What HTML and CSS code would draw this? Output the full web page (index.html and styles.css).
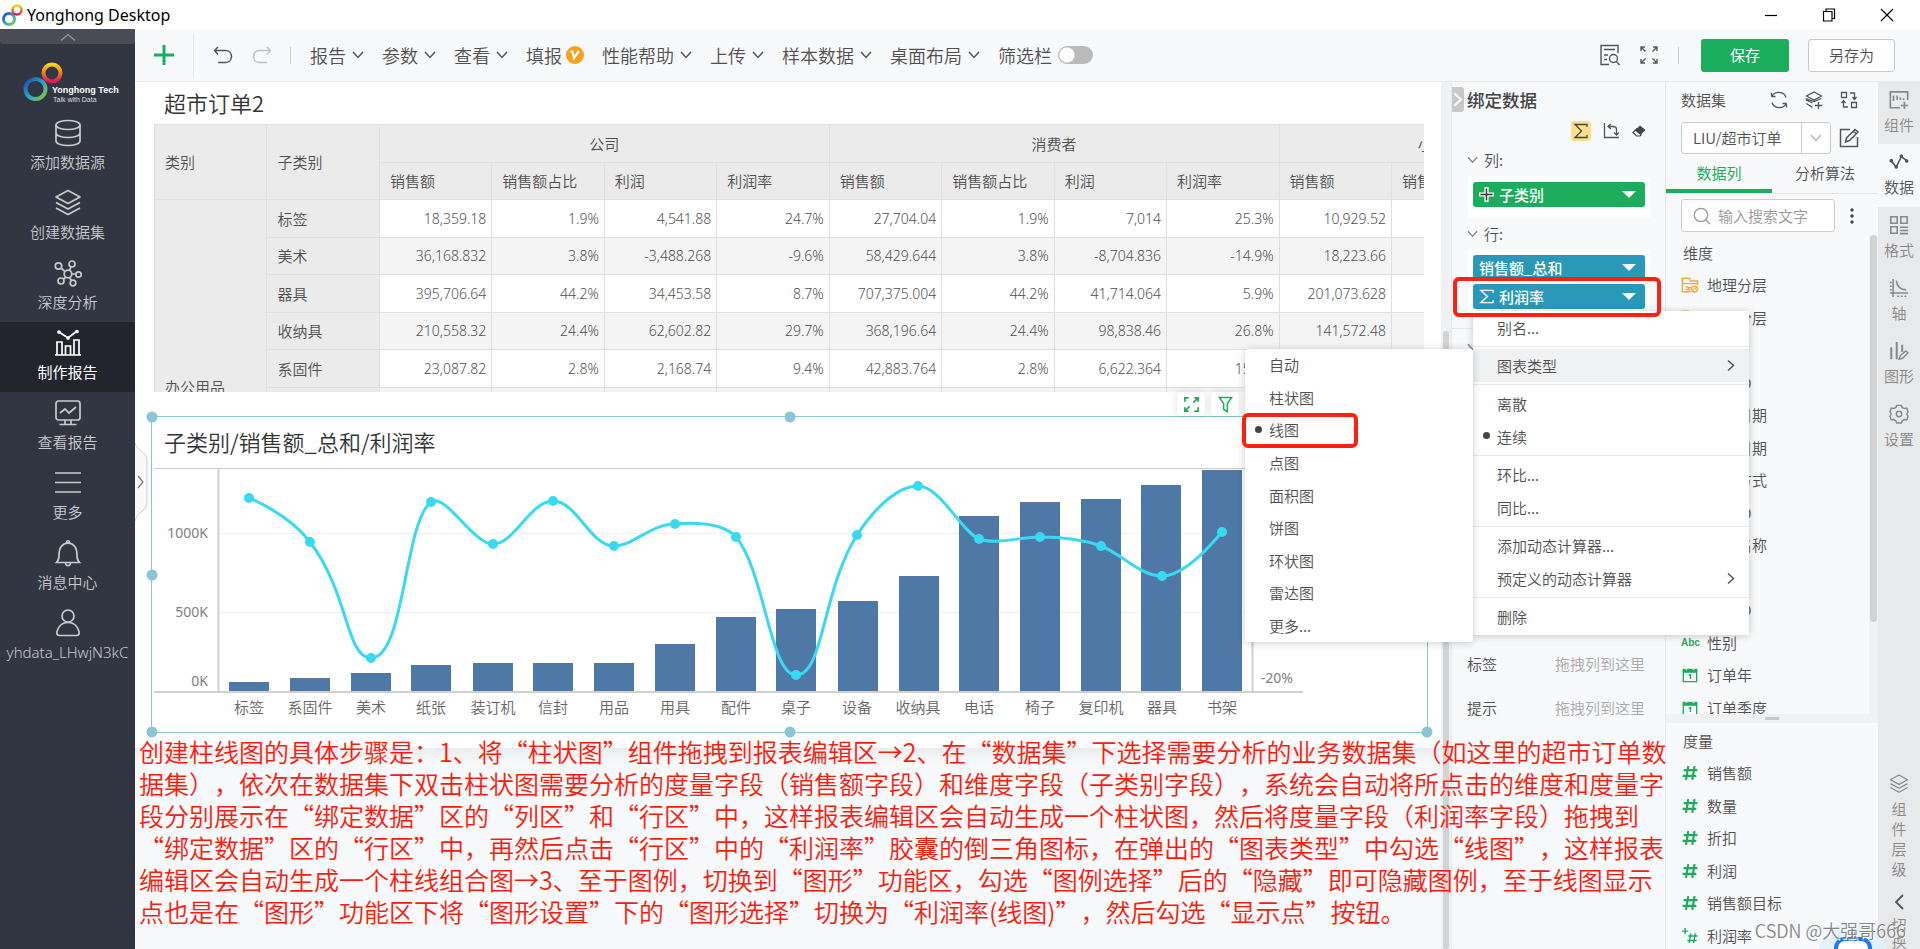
FILE: index.html
```html
<!DOCTYPE html>
<html lang="zh-CN">
<head>
<meta charset="utf-8">
<title>Yonghong Desktop</title>
<link rel="stylesheet" href="styles.css">
</head>
<body>
<svg class="defs" aria-hidden="true">
  <defs>
    <linearGradient id="gb" x1="0" y1="0" x2="1" y2="1"><stop offset="0" stop-color="#1a4fa8"/><stop offset=".5" stop-color="#28a3cf"/><stop offset="1" stop-color="#8cc63e"/></linearGradient>
    <linearGradient id="gr" x1="0" y1="0" x2="0" y2="1"><stop offset="0" stop-color="#fcd21c"/><stop offset=".5" stop-color="#f47a20"/><stop offset="1" stop-color="#e6145a"/></linearGradient>
    <symbol id="down" viewBox="0 0 12 8"><path d="M1 1l5 5.500L11 1" fill="none" stroke="currentColor" stroke-width="1.500"/></symbol>
    <symbol id="right" viewBox="0 0 8 12"><path d="M1 1l5.500 5L1 11" fill="none" stroke="currentColor" stroke-width="1.400"/></symbol>
    <symbol id="layers" viewBox="0 0 28 28"><path d="M14 1.500L26 8 14 14.500 2 8zM2 13.500l12 6.500 12-6.500M2 19l12 6.500L26 19" fill="none" stroke="currentColor" stroke-width="1.700" stroke-linejoin="round"/></symbol>
    <symbol id="hash" viewBox="0 0 14 14"><path d="M5.500 1L3.500 13M11 1L9 13M1.500 4.500h12M.5 9.500h12" fill="none" stroke="currentColor" stroke-width="1.900"/></symbol>
    <symbol id="cal" viewBox="0 0 18 18"><path d="M1.500 3h15v13.500h-15z" fill="none" stroke="currentColor" stroke-width="1.500"/><path d="M1 2h16v4.500H1z" fill="currentColor"/><path d="M5 0v3.500M13 0v3.500" stroke="#f8f9fb" stroke-width="1.500"/><path d="M7.500 9.500L9.500 8.500v5" fill="none" stroke="currentColor" stroke-width="1.500"/></symbol>
    <symbol id="folder" viewBox="0 0 20 18"><path d="M18.500 9V4.500h-8L9 1.500H1.500v15H11M1.500 7.500h17M5 11h2l1 1h3M5 14h5" fill="none" stroke="currentColor" stroke-width="1.500"/><circle cx="15" cy="13.500" r="3.300" fill="none" stroke="currentColor" stroke-width="1.400"/><path d="M12.700 15.800l4.600-4.600" stroke="currentColor" stroke-width="1.300"/></symbol>
  </defs>
</svg>

<div class="app">
  <header class="titlebar">
    <svg class="app-icon" viewBox="0 0 22 26"><circle cx="8" cy="17" r="5.500" fill="none" stroke="url(#gb)" stroke-width="3"/><circle cx="16" cy="8" r="4.500" fill="none" stroke="url(#gr)" stroke-width="2.600"/></svg>
    <span class="app-name">Yonghong Desktop</span>
    <div class="win-controls">
      <button aria-label="最小化"><svg viewBox="0 0 14 14"><path d="M1 7.500h12" stroke="#000" stroke-width="1.200"/></svg></button>
      <button aria-label="还原"><svg viewBox="0 0 14 14"><path d="M1.500 3.500h8.500v9.500H1.500zM4 3.500V1h8.500v9.500H10" fill="none" stroke="#000" stroke-width="1.200"/></svg></button>
      <button aria-label="关闭"><svg viewBox="0 0 14 14"><path d="M1 1l12 12M13 1L1 13" stroke="#000" stroke-width="1.200"/></svg></button>
    </div>
  </header>

  <div class="body">
    <nav class="nav">
      <button class="nav-fold" aria-label="收起"><svg viewBox="0 0 16 8"><path d="M1 7.500l7-6 7 6" fill="none" stroke="#8b8d95" stroke-width="1.600"/></svg></button>
      <div class="logo">
        <svg viewBox="0 0 108 44">
          <circle cx="12.500" cy="28" r="10" fill="none" stroke="url(#gb)" stroke-width="4"/>
          <circle cx="29" cy="12" r="8.500" fill="none" stroke="url(#gr)" stroke-width="4"/>
          <text x="29" y="32" class="logo-name">Yonghong Tech</text>
          <text x="30" y="41" class="logo-sub">Talk with Data</text>
        </svg>
      </div>
      <a class="nav-item" href="#"><svg viewBox="0 0 28 28"><ellipse cx="14" cy="6" rx="12" ry="4.500"/><path d="M2 6v16c0 2.500 5.500 4.500 12 4.500s12-2 12-4.500V6M2 14c0 2.500 5.500 4.500 12 4.500s12-2 12-4.500"/></svg>添加数据源</a>
      <a class="nav-item" href="#"><svg viewBox="0 0 28 28"><use href="#layers"/></svg>创建数据集</a>
      <a class="nav-item" href="#"><svg viewBox="0 0 28 28"><circle cx="14" cy="15" r="3.800"/><circle cx="4.500" cy="7" r="3.200"/><circle cx="18" cy="5" r="3"/><circle cx="24.500" cy="15.500" r="2.700"/><circle cx="7" cy="22" r="3"/><circle cx="19" cy="24" r="2.800"/><path d="M7 9l4 3.500M17 8l-1.500 3.500M18 15h4M12 18l-3 2.500M15.500 18.500l2 3"/></svg>深度分析</a>
      <a class="nav-item active" href="#"><svg viewBox="0 0 28 28"><path d="M1 26h26M3 26V13h5v13M11.500 26V17h5v9M20 26V11h5v15M5 3l9 6 9-7"/><circle cx="5" cy="3" r="1"/><circle cx="14" cy="9" r="1"/><circle cx="23" cy="2.500" r="1"/></svg>制作报告</a>
      <a class="nav-item" href="#"><svg viewBox="0 0 28 28"><rect x="2" y="2" width="24" height="19" rx="2.500"/><path d="M6 14l5-4 4 4 7-6M11 21v4M17 21v4M5.500 25.500h17"/></svg>查看报告</a>
      <a class="nav-item" href="#"><svg viewBox="0 0 28 28"><path d="M1 4h26M1 13.500h26M1 23h26"/></svg>更多</a>
      <a class="nav-item" href="#"><svg viewBox="0 0 28 28"><path d="M2.500 23.500h23c-2-2-2.500-4-2.500-7 0-6-2-12-9-12.500C7 4.500 5 10.500 5 16.500c0 3-.5 5-2.500 7zM12.500 4c0-3 3-3 3 0M11.500 24c.5 3.500 4.500 3.500 5 0"/></svg>消息中心</a>
      <a class="nav-item" href="#"><svg viewBox="0 0 28 28"><circle cx="14" cy="7" r="6"/><path d="M5.500 26.500c-2.500 0-3-2-2.500-4C4.500 17 8 13.500 14 13.500S23.500 17 25 22.500c.5 2 0 4-2.500 4z"/></svg><span class="latin">yhdata_LHwjN3kC</span></a>
    </nav>

    <div class="workspace">
      <div class="toolbar">
        <button class="tb-add" aria-label="新建"><svg viewBox="0 0 22 22"><path d="M11 1v20M1 11h20" stroke="#1aae5c" stroke-width="3"/></svg></button>
        <button class="tb-undo" aria-label="撤销"><svg viewBox="0 0 20 18"><path d="M5 1L1.500 4.500 5 8.500M2 4.500h10.500c3.500 0 6 2.500 6 6s-2.500 6-6 6H5" fill="none" stroke="#555" stroke-width="1.500"/></svg></button>
        <button class="tb-undo" aria-label="重做"><svg viewBox="0 0 20 18"><path d="M15 1l3.500 3.500L15 8.500M18 4.500H7.500c-3.500 0-6 2.500-6 6s2.500 6 6 6H15" fill="none" stroke="#c0c0c0" stroke-width="1.500"/></svg></button>
        <i class="tb-sep"></i>
        <div class="tb-menus">
          <button>报告<svg><use href="#down"/></svg></button>
          <button>参数<svg><use href="#down"/></svg></button>
          <button>查看<svg><use href="#down"/></svg></button>
          <button class="vip">填报<svg class="vip-icon" viewBox="0 0 18 18"><circle cx="9" cy="9" r="9" fill="#fa9e1b"/><path d="M4.500 6l2-.5L8 12l5-7" fill="none" stroke="#fff" stroke-width="2.200"/></svg></button>
          <button>性能帮助<svg><use href="#down"/></svg></button>
          <button>上传<svg><use href="#down"/></svg></button>
          <button>样本数据<svg><use href="#down"/></svg></button>
          <button>桌面布局<svg><use href="#down"/></svg></button>
          <label class="switch">筛选栏<input type="checkbox"></label>
        </div>
        <div class="tb-right">
          <button class="tb-icon" aria-label="预览"><svg viewBox="0 0 22 22"><path d="M19 9V1.500H2v19h8M5 5.500h11M5 11h4M5 15.500h3" fill="none" stroke="#555" stroke-width="1.400"/><circle cx="14.500" cy="14.500" r="4" fill="none" stroke="#555" stroke-width="1.400"/><path d="M17.500 17.500l3 3.500" stroke="#555" stroke-width="1.400"/></svg></button>
          <button class="tb-icon" aria-label="全屏"><svg viewBox="0 0 22 22"><path d="M3 7V3h4M3 3l4.500 4.500M15 3h4v4M19 3l-4.500 4.500M3 15v4h4M3 19l4.500-4.500M19 15v4h-4M19 19l-4.500-4.500" fill="none" stroke="#555" stroke-width="1.400"/></svg></button>
          <i class="tb-sep"></i>
          <button class="save">保存</button>
          <button class="save-as">另存为</button>
        </div>
      </div>

      <div class="content">
        <main class="canvas">
          <div class="report">
            <h1 class="report-title">超市订单2</h1>
            <div class="table-wrap">
              <table class="pivot">
                <thead>
                  <tr><th rowspan="2">类别</th><th rowspan="2">子类别</th><th colspan="4" class="grp">公司</th><th colspan="4" class="grp">消费者</th><th colspan="3" class="grp">小型企业</th></tr>
                  <tr class="short"><th>销售额</th><th>销售额占比</th><th>利润</th><th>利润率</th><th>销售额</th><th>销售额占比</th><th>利润</th><th>利润率</th><th>销售额</th><th>销售额占比</th><th>利润</th></tr>
                </thead>
                <tbody>
                  <tr><th rowspan="6" class="cat">办公用品</th><th>标签</th><td>18,359.18</td><td>1.9%</td><td>4,541.88</td><td>24.7%</td><td>27,704.04</td><td>1.9%</td><td>7,014</td><td>25.3%</td><td>10,929.52</td><td></td><td></td></tr>
                  <tr class="short alt"><th>美术</th><td>36,168.832</td><td>3.8%</td><td>-3,488.268</td><td>-9.6%</td><td>58,429.644</td><td>3.8%</td><td>-8,704.836</td><td>-14.9%</td><td>18,223.66</td><td></td><td></td></tr>
                  <tr><th>器具</th><td>395,706.64</td><td>44.2%</td><td>34,453.58</td><td>8.7%</td><td>707,375.004</td><td>44.2%</td><td>41,714.064</td><td>5.9%</td><td>201,073.628</td><td></td><td></td></tr>
                  <tr class="short alt"><th>收纳具</th><td>210,558.32</td><td>24.4%</td><td>62,602.82</td><td>29.7%</td><td>368,196.64</td><td>24.4%</td><td>98,838.46</td><td>26.8%</td><td>141,572.48</td><td></td><td></td></tr>
                  <tr><th>系固件</th><td>23,087.82</td><td>2.8%</td><td>2,168.74</td><td>9.4%</td><td>42,883.764</td><td>2.8%</td><td>6,622.364</td><td>15.4%</td><td></td><td></td><td></td></tr>
                  <tr class="short alt"><th></th><td></td><td></td><td></td><td></td><td></td><td></td><td></td><td></td><td></td><td></td><td></td></tr>
                </tbody>
              </table>
            </div>

            <section class="chart">
              <h2 class="chart-title">子类别/销售额_总和/利润率</h2>
              <svg class="plot" viewBox="154 468 1270 264">
                <path d="M219 533.500h1033M219 612.500h1033" stroke="#f0f0f0"/>
                <path d="M154 468.500h1270" stroke="#ccc"/>
                <g class="bars">
                  <path d="M229 682h40v9h-40zM290 678h40v13h-40zM351 673h40v18h-40zM411 665h40v26h-40zM473 663h40v28h-40zM533 663h40v28h-40zM594 663h40v28h-40zM655 644h40v47h-40zM716 617h40v74h-40zM776 609h40v82h-40zM838 601h40v90h-40zM899 576h40v115h-40zM959 516h40v175h-40zM1020 502h40v189h-40zM1081 499h40v192h-40zM1141 485h40v206h-40zM1202 470h40v221h-40z"/>
                </g>
                <path d="M218.500 468v224M1252.500 468v224" stroke="#d0d0d0" stroke-width="2"/>
                <path d="M154 692h1149" stroke="#d0d0d0" stroke-width="2"/>
                <path class="line" d="M249 498C249 498 288 513 310 542C349 593 346 658 371 658C405 658 404 522 431 502C445 492 473 544 493 544C515 544 530 501 553 501C577 501 590 546 614 546C634 546 650 524 675 524C700 522 724 524 736 537C765 572 770 675 796 675C824 675 822 590 857 535C878 503 900 486 918 486C940 486 960 530 979 539C996 545 1020 537 1040 537C1062 537 1084 540 1101 546C1122 554 1140 576 1162 576C1180 576 1202 556 1222 532"/>
                <g fill="#38daf2">
                  <circle cx="249" cy="498" r="5"/><circle cx="310" cy="542" r="5"/><circle cx="371" cy="658" r="5"/><circle cx="431" cy="502" r="5"/><circle cx="493" cy="544" r="5"/><circle cx="553" cy="501" r="5"/><circle cx="614" cy="546" r="5"/><circle cx="675" cy="524" r="5"/><circle cx="736" cy="537" r="5"/><circle cx="796" cy="675" r="5"/><circle cx="857" cy="535" r="5"/><circle cx="918" cy="486" r="5"/><circle cx="979" cy="539" r="5"/><circle cx="1040" cy="537" r="5"/><circle cx="1101" cy="546" r="5"/><circle cx="1162" cy="576" r="5"/><circle cx="1222" cy="532" r="5"/>
                </g>
                <g class="ylab"><text x="208" y="538">1000K</text><text x="208" y="617">500K</text><text x="208" y="686">0K</text><text x="1293" y="683">-20%</text></g>
                <g class="xlab"><text x="249" y="713">标签</text><text x="310" y="713">系固件</text><text x="371" y="713">美术</text><text x="431" y="713">纸张</text><text x="493" y="713">装订机</text><text x="553" y="713">信封</text><text x="614" y="713">用品</text><text x="675" y="713">用具</text><text x="736" y="713">配件</text><text x="796" y="713">桌子</text><text x="857" y="713">设备</text><text x="918" y="713">收纳具</text><text x="979" y="713">电话</text><text x="1040" y="713">椅子</text><text x="1101" y="713">复印机</text><text x="1162" y="713">器具</text><text x="1222" y="713">书架</text></g>
              </svg>
              <i class="knob tl"></i><i class="knob tc"></i><i class="knob ml"></i><i class="knob bl"></i><i class="knob bc"></i><i class="knob br"></i>
              <div class="chart-tools">
                <button aria-label="放大"><svg viewBox="0 0 18 18"><path d="M2 6V2h4M12 2h4v4M16 2l-5 5M2 12v4h4M2 16l5-5M16 12v4h-4" fill="none" stroke="#1aae5c" stroke-width="1.800"/></svg></button>
                <button aria-label="筛选"><svg viewBox="0 0 18 18"><path d="M2.500 1.500h13L11 8v8.500L7 14V8z" fill="none" stroke="#1aae5c" stroke-width="1.600"/></svg></button>
              </div>
            </section>
          </div>
          <button class="side-pull" aria-label="展开"><svg viewBox="0 0 14 78"><path d="M0 0c1 7 12 9 12 17v43c0 8-11 10-12 18" fill="#f8f9fb" stroke="#ccd0d6"/><path d="M3 33l5 6-5 6" fill="none" stroke="#777" stroke-width="1.200"/></svg></button>
        </main>

        <div class="scroll main-scroll"><i></i></div>

        <section class="bind">
          <button class="bind-fold" aria-label="收起绑定"><svg><use href="#right"/></svg></button>
          <h3 class="bind-title">绑定数据</h3>
          <div class="bind-tools">
            <button class="on" aria-label="汇总"><svg viewBox="0 0 16 16"><path d="M14 4V1.500H2L8.500 8 2 14.500h12V12" fill="none" stroke="#444" stroke-width="1.300"/></svg></button>
            <button aria-label="交换"><svg viewBox="0 0 16 16"><path d="M1.500 0v14.500H16M8 1L5 3.500 8 6M5 3.500h5c2.500 0 3.500 1 3.500 3V12M11 9.500l2.500 2.500L16 9.500" fill="none" stroke="#555" stroke-width="1.300"/></svg></button>
            <button aria-label="清除"><svg viewBox="0 0 16 16"><path d="M9 2.500l5.500 4.500-5 5L4 7.500z" fill="#444"/><path d="M6 5.500l-4 4 3.500 3.500H9l1.500-1.500" fill="none" stroke="#444" stroke-width="1.200"/></svg></button>
          </div>
          <div class="bind-label"><svg><use href="#down"/></svg>列:</div>
          <div class="zone">
            <button class="chip green"><svg class="chip-icon" viewBox="0 0 16 16"><path d="M8 0v16M0 8h16" stroke="#fff" stroke-width="4.500"/><path d="M8 1.500v13M1.500 8h13" stroke="#333" stroke-width="1.500"/></svg>子类别<i class="caret"></i></button>
          </div>
          <div class="bind-label second"><svg><use href="#down"/></svg>行:</div>
          <div class="zone two">
            <button class="chip">销售额_总和<i class="caret"></i></button>
            <button class="chip"><svg class="chip-icon" viewBox="0 0 16 16"><path d="M15 4V1.500H2L9 8l-7 6.500h13V12" fill="none" stroke="#fff" stroke-width="1.500"/></svg>利润率<i class="caret"></i></button>
          </div>
          <div class="bind-more"><svg><use href="#down"/></svg></div>
          <div class="drops">
            <div class="drop"><span>标签</span><em>拖拽列到这里</em></div>
            <div class="drop"><span>提示</span><em>拖拽列到这里</em></div>
          </div>
        </section>

        <section class="data">
          <div class="data-head"><span>数据集</span>
            <button aria-label="刷新"><svg viewBox="0 0 18 18"><path d="M1.500 5.500v-4M1.500 5.500h4M2 5c3-5 12-5 14 1.500M16.500 12.500v4M16.500 12.500h-4M16 13C13 18 4 18 2 11.500" fill="none" stroke="#555" stroke-width="1.300"/></svg></button>
            <button aria-label="添加"><svg viewBox="0 0 18 18"><path d="M9 1l7.500 4L9 9 1.500 5zM16.500 7.500L9 10.500 1.500 8v1l6 3M1.500 12.500l6 4M13.500 11v7M10 14.500h7" fill="none" stroke="#555" stroke-width="1.300"/></svg></button>
            <button aria-label="替换"><svg viewBox="0 0 18 18"><path d="M1.500 1.500h5v5h-5zM11.500 11.500h5v5h-5zM10 2h4.500v6M12.500 6l2 2.500 2-2.500M8 16H3.500v-6M1.500 12l2-2.500 2 2.500" fill="none" stroke="#555" stroke-width="1.300"/></svg></button>
          </div>
          <div class="data-pick">
            <div class="select-box"><select aria-label="数据集"><option>LIU/超市订单</option></select><span><svg><use href="#down"/></svg></span></div>
            <button aria-label="编辑"><svg viewBox="0 0 20 20"><path d="M11 1.500H1.500v17h17V9M6.500 14l1-4L16 1.500l3 2.500-8.500 8.500zM14.500 3l3 3" fill="none" stroke="#555" stroke-width="1.500"/></svg></button>
          </div>
          <div class="tabs"><button class="sel">数据列</button><button>分析算法</button></div>
          <div class="search-row">
            <label class="search"><svg viewBox="0 0 18 18"><circle cx="8" cy="8" r="6.700" fill="none" stroke="#999" stroke-width="1.300"/><path d="M13 13l4 4" stroke="#999" stroke-width="1.400"/></svg><input type="text" placeholder="输入搜索文字" aria-label="搜索"></label>
            <button aria-label="更多"><svg viewBox="0 0 4 16"><circle cx="2" cy="2" r="1.700"/><circle cx="2" cy="8" r="1.700"/><circle cx="2" cy="14" r="1.700"/></svg></button>
          </div>
          <div class="dims">
            <div class="dim-list">
              <h4>维度</h4>
              <ul class="fields">
                <li class="or"><svg><use href="#folder"/></svg>地理分层</li>
                <li class="or"><svg><use href="#folder"/></svg>产品分层</li>
                <li><b>Abc</b>国家</li>
                <li><b>Abc</b>客户ID</li>
                <li><svg><use href="#cal"/></svg>订单日期</li>
                <li><svg><use href="#cal"/></svg>发货日期</li>
                <li><b>Abc</b>邮寄方式</li>
                <li><b>Abc</b>产品ID</li>
                <li><b>Abc</b>产品名称</li>
                <li><b>Abc</b>类别</li>
                <li><b>Abc</b>订单ID</li>
                <li><b>Abc</b>性别</li>
                <li><svg><use href="#cal"/></svg>订单年</li>
                <li><svg><use href="#cal"/></svg>订单季度</li>
              </ul>
            </div>
            <div class="scroll dim-scroll"><i></i></div>
          </div>
          <div class="splitter"><i></i></div>
          <div class="measures">
            <h4>度量</h4>
            <ul class="fields">
              <li><svg><use href="#hash"/></svg>销售额</li>
              <li><svg><use href="#hash"/></svg>数量</li>
              <li><svg><use href="#hash"/></svg>折扣</li>
              <li><svg><use href="#hash"/></svg>利润</li>
              <li><svg><use href="#hash"/></svg>销售额目标</li>
              <li><svg viewBox="0 0 18 18"><path d="M3.500 0v7M0 3.500h7M10 6L8 17M15 6l-2 11M7 9h10.500M6 14h10.500" fill="none" stroke="currentColor" stroke-width="1.600"/></svg>利润率</li>
            </ul>
          </div>
        </section>

        <aside class="rail">
          <button><svg viewBox="0 0 22 22"><path d="M20.500 11V2h-19v17.500H12M5 6v6M9 6v5M12.500 8v3M16 9v2M17 13v8M13 17h8" fill="none" stroke="currentColor" stroke-width="1.800"/></svg>组件</button>
          <button class="sel"><svg viewBox="0 0 22 22"><path d="M2 9.500l6 7L13.500 5 20 10" fill="none" stroke="currentColor" stroke-width="1.800"/><g fill="currentColor"><circle cx="2.500" cy="9.500" r="2"/><circle cx="8" cy="16.500" r="2"/><circle cx="13.500" cy="4.500" r="2"/><circle cx="19.500" cy="10" r="2"/></g></svg>数据</button>
          <button><svg viewBox="0 0 22 22"><path d="M2 2h7v7H2zM13 2h7v7h-7zM2 13h7v7H2zM12 13.500h9M12 17h9M12 20.500h9" fill="none" stroke="currentColor" stroke-width="1.700"/></svg>格式</button>
          <button><svg viewBox="0 0 22 22"><path d="M4.500 1v20M1 16.500h20M8 3c1 7 5 10 11 10M1 5h2M1 9h2M1 13h2M9 20h2M13 20h2M17 20h2" fill="none" stroke="currentColor" stroke-width="1.700"/></svg>轴</button>
          <button><svg viewBox="0 0 22 22"><path d="M2.500 7v13M8.500 1v19M14.500 4v8" stroke="currentColor" stroke-width="2.200"/><path d="M11 20l1.500-4 6-5 2.500 2-6 6z" fill="none" stroke="currentColor" stroke-width="1.500"/></svg>图形</button>
          <button><svg viewBox="0 0 22 22"><path d="M8.500 1.500h5l1 2.500 2.500 1 2.500-.5L21 8.500 19.500 11l1.500 2.500-1.500 4-2.500-.5-2.500 1.500-1 2.500h-5l-1-2.500L5 17l-2.500.5-1.500-4L2.500 11 1 8.500l1.500-4L5 5l2.500-1z" fill="none" stroke="currentColor" stroke-width="1.600" stroke-linejoin="round"/><circle cx="11" cy="11" r="3" fill="none" stroke="currentColor" stroke-width="1.600"/></svg>设置</button>
          <div class="rail-bottom">
            <button class="vert"><svg><use href="#layers"/></svg><span>组件层级</span></button>
            <button class="vert"><svg class="back" viewBox="0 0 10 16"><path d="M9 1L2 8l7 7" fill="none" stroke="#555" stroke-width="1.800"/></svg><span class="tight">切换</span></button>
          </div>
        </aside>
      </div>
    </div>
  </div>

  <div class="menu ctx">
    <button>别名...</button><hr>
    <button class="hover">图表类型<svg><use href="#right"/></svg></button><hr>
    <button>离散</button>
    <button class="dot">连续</button><hr>
    <button>环比...</button>
    <button>同比...</button><hr>
    <button>添加动态计算器...</button>
    <button>预定义的动态计算器<svg><use href="#right"/></svg></button><hr>
    <button>删除</button>
  </div>
  <div class="menu sub">
    <button>自动</button><button>柱状图</button><button class="dot">线图</button><button>点图</button><button>面积图</button><button>饼图</button><button>环状图</button><button>雷达图</button><button>更多...</button>
  </div>
  <i class="mark mark-chip"></i>
  <i class="mark mark-line"></i>

  <p class="note">创建柱线图的具体步骤是：1、将“柱状图”组件拖拽到报表编辑区→2、在“数据集”下选择需要分析的业务数据集（如这里的超市订单数<br>据集），依次在数据集下双击柱状图需要分析的度量字段（销售额字段）和维度字段（子类别字段），系统会自动将所点击的维度和度量字<br>段分别展示在“绑定数据”区的“列区”和“行区”中，这样报表编辑区会自动生成一个柱状图，然后将度量字段（利润率字段）拖拽到<br>“绑定数据”区的“行区”中，再然后点击“行区”中的“利润率”胶囊的倒三角图标，在弹出的“图表类型”中勾选“线图”，这样报表<br>编辑区会自动生成一个柱线组合图→3、至于图例，切换到“图形”功能区，勾选“图例选择”后的“隐藏”即可隐藏图例，至于线图显示<br>点也是在“图形”功能区下将“图形设置”下的“图形选择”切换为“利润率(线图)”，然后勾选“显示点”按钮。</p>

  <svg class="bot" viewBox="0 0 70 28"><circle cx="35" cy="36" r="35" fill="#e3f1fd"/><rect x="18" y="18" width="34" height="24" rx="9" fill="#fff" stroke="#1c7cf4" stroke-width="4"/><path d="M35 8v8" stroke="#1c7cf4" stroke-width="3"/></svg>
  <div class="watermark">CSDN @大强哥666</div>
</div>
</body>
</html>
```
FILE: styles.css
```css
* { box-sizing: border-box; }
body {
  margin: 0;
  font-family: "Noto Sans CJK SC", "Noto Sans", sans-serif;
  font-size: 15px;
  font-weight: 350;
  line-height: 20px;
  color: #505050;
  text-spacing-trim: space-all;
}
button, input, select { font: inherit; color: inherit; }
button { border: 0; padding: 0; background: none; }
h1, h2, h3, h4, ul, p { margin: 0; padding: 0; font-weight: inherit; }
ul { list-style: none; }
svg { display: block; flex: none; }
.defs { position: absolute; width: 0; height: 0; }

.app { position: relative; display: flex; flex-direction: column; height: 100vh; overflow: hidden; background: #fff; }
.titlebar { display: flex; align-items: center; height: 29px; flex: none; padding-left: 1px; font-family: "Noto Sans", sans-serif; font-size: 16px; font-weight: 400; color: #000; }
.app-icon { width: 22px; height: 26px; }
.app-name { margin-left: 4px; }
.win-controls { display: flex; gap: 44px; margin-left: auto; padding-right: 26px; }
.win-controls svg { width: 14px; height: 14px; }

.body { display: flex; flex: 1; min-height: 0; }

/* left navigation */
.nav { width: 135px; flex: none; background: #323542; color: #c9cacf; }
.nav-fold { display: grid; place-items: center; width: 100%; height: 15px; background: #494b56; border-radius: 0 0 3px 3px; }
.nav-fold svg { width: 16px; height: 8px; }
.logo { height: 68px; padding: 17px 0 0 23px; }
.logo svg { width: 108px; height: 44px; }
.logo-name { font: bold 9px "Liberation Sans", sans-serif; fill: #fff; }
.logo-sub { font: 7px "Liberation Sans", sans-serif; fill: #ddd; }
.nav-item { display: flex; flex-direction: column; align-items: center; gap: 5px; height: 70px; padding-top: 7px; color: inherit; text-decoration: none; }
.nav-item svg { width: 28px; height: 28px; fill: none; stroke: currentColor; stroke-width: 1.7; }
.nav-item.active { background: #22242e; color: #fff; font-weight: 400; }
.latin { font-family: "Noto Sans", sans-serif; font-size: 15px; }

.workspace { display: flex; flex-direction: column; flex: 1; min-width: 0; }

/* toolbar */
.toolbar { display: flex; align-items: center; height: 53px; flex: none; padding-right: 25px; background: #f8f9fb; border-bottom: 1px solid #e6e8ee; }
.tb-add { display: grid; place-items: center; width: 59px; height: 44px; border-right: 1px solid #e6e8ee; }
.tb-add svg { width: 22px; height: 22px; }
.tb-undo { margin-left: 19px; }
.tb-undo svg { width: 20px; height: 18px; }
.tb-sep { width: 1px; height: 17px; margin-left: 18px; background: #ccc; }
.tb-menus { display: flex; gap: 18px; margin-left: 19px; font-size: 18px; line-height: 24px; }
.tb-menus button, .switch { display: flex; align-items: center; gap: 6px; }
.tb-menus button svg { width: 12px; height: 8px; }
.tb-menus .vip { gap: 4px; }
.tb-menus .vip .vip-icon { width: 18px; height: 18px; }
.switch input { appearance: none; width: 35px; height: 18px; margin: 0; border-radius: 9px; background: radial-gradient(circle at 9px 9px, #fff 7px, #bbb 8px); }
.tb-right { display: flex; align-items: center; margin-left: auto; }
.tb-icon { margin-left: 17px; }
.tb-icon svg { width: 22px; height: 22px; }
.save, .save-as { height: 33px; margin-left: 22px; border-radius: 3px; }
.save { width: 88px; background: #1aae5c; color: #fff; font-weight: 400; }
.save-as { width: 87px; margin-left: 19px; border: 1px solid #c8c8c8; background: #fff; }

.content { display: flex; flex: 1; min-height: 0; }

/* report canvas */
.canvas { position: relative; flex: 1; min-width: 0; background: linear-gradient(#eaecee, #f8f9fb 14px) 0 666px no-repeat #f8f9fb; }
.report { padding-bottom: 15px; background: #fff; }
.report-title { padding: 0 0 2px 29px; font-size: 22px; line-height: 40px; color: #333; }
.table-wrap { height: 268px; margin: 0 17px 0 19px; overflow: hidden; }
.pivot { width: 1463px; table-layout: fixed; border-collapse: collapse; border-top: 1px solid #e0e0e0; }
.pivot tr { height: 38px; }
.pivot tr.short { height: 37px; }
.pivot th, .pivot td { padding: 0 10px; border: 1px solid #e0e0e0; line-height: 20px; }
.pivot th { background: #ebebeb; font-weight: inherit; text-align: left; }
.pivot td { padding: 0 5px; font-family: "Noto Sans", sans-serif; font-size: 14px; text-align: right; }
.pivot .grp { text-align: center; }
.pivot .alt td { background: #f4f4f4; }
.pivot .cat { padding-bottom: 27px; vertical-align: bottom; }

.chart { position: relative; margin: 24px 13px 0 16px; padding: 0 3px 0 2px; border: 1px solid #8cc5d4; }
.chart-title { padding: 0 0 2px 10px; font-size: 22px; line-height: 49px; color: #333; }
.plot { width: 100%; height: auto; }
.bars { fill: #4e79a7; }
.line { fill: none; stroke: #38daf2; stroke-width: 3; }
.ylab { font: 14px "Noto Sans", sans-serif; fill: #808080; text-anchor: end; }
.xlab { font-size: 15px; fill: #666; text-anchor: middle; }
.knob { position: absolute; width: 11px; height: 11px; border-radius: 50%; background: #8cc5d4; transform: translate(-50%, -50%); }
.tl { left: 0; top: 0; } .tc { left: 50%; top: 0; } .ml { left: 0; top: 50%; }
.bl { left: 0; top: 100%; } .bc { left: 50%; top: 100%; } .br { left: 100%; top: 100%; }
.chart-tools { position: absolute; top: -25px; right: 188px; display: flex; gap: 6px; }
.chart-tools button { display: grid; place-items: center; width: 28px; height: 24px; border-radius: 4px; background: #fff; box-shadow: 0 0 6px #00284626; }
.chart-tools svg { width: 17px; height: 17px; }
.side-pull { position: absolute; left: 0; top: 361px; }
.side-pull svg { width: 14px; height: 78px; }

.scroll { flex: none; background: #f0f1f3; }
.scroll i { display: block; border-radius: 4px; background: #d3d3d3; }
.main-scroll { width: 11px; padding: 249px 2px 0; border-right: 1px solid #e6e8ee; }
.main-scroll i { height: 100%; }

/* binding panel */
.bind { position: relative; width: 213px; flex: none; padding: 8px 15px 0 15px; background: #f8f9fb; }
.bind-fold { position: absolute; left: 0; top: 5px; display: grid; place-items: center; width: 12px; height: 25px; border-radius: 0 3px 3px 0; background: #c8c8c8; color: #fff; }
.bind-fold svg { width: 10px; height: 15px; }
.bind-title { line-height: 20px; font-weight: 500; color: #444; }
.bind-tools { display: flex; justify-content: flex-end; gap: 8px; margin: 11px 1px 0 0; }
.bind-tools button { display: grid; place-items: center; width: 20px; height: 20px; border-radius: 3px; }
.bind-tools .on { background: #fde08c; margin-right: 2px; }
.bind-tools svg { width: 16px; height: 16px; }
.bind-label { display: flex; align-items: center; gap: 6px; margin: 9px 0 7px; }
.bind-label svg, .bind-more svg { width: 11px; height: 8px; color: #888; }
.bind-label.second { margin: 6px 0; }
.zone { display: grid; gap: 4px; height: 41px; margin-left: 1px; padding: 5px; background: #fff; border-radius: 3px; }
.zone.two { height: 64px; }
.chip { display: flex; align-items: center; gap: 5px; height: 25px; padding: 0 9px 0 6px; border-radius: 3px; background: #2a98b8; color: #fff; font-weight: 500; }
.chip.green { background: #1bad5b; }
.chip-icon { width: 15px; height: 15px; }
.caret { margin-left: auto; border: 7px solid transparent; border-top-color: #fff; border-bottom: 0; }
.bind-more { margin: 14px -15px 0 -15px; padding: 14px 0 0 15px; border-top: 1px solid #e6e8ee; }
.drops { display: grid; gap: 24px; padding: 303px 5px 0 0; }
.drop { display: flex; justify-content: space-between; }
.drop em { font-style: normal; color: #aaa; }

/* data panel */
.data { display: flex; flex-direction: column; width: 213px; flex: none; border-left: 1px solid #e6e8ee; background: #f8f9fb; overflow: hidden; }
.data-head { display: flex; align-items: center; gap: 17px; padding: 8px 20px 0 15px; }
.data-head span { margin-right: auto; }
.data-head svg { width: 18px; height: 18px; }
.data-pick { display: flex; align-items: center; gap: 8px; margin-top: 12px; padding: 0 19px 0 15px; }
.data-pick button svg { width: 20px; height: 20px; }
.select-box { display: flex; flex: 1; height: 32px; border: 1px solid #ccc; border-radius: 3px; background: #fff; }
.select-box select { appearance: none; flex: 1; min-width: 0; border: 0; padding: 0 0 0 11px; background: none; }
.select-box span { display: grid; place-items: center; width: 29px; border-left: 1px solid #ccc; color: #bbb; }
.select-box svg { width: 12px; height: 8px; }
.tabs { display: grid; grid-template-columns: 1fr 1fr; border-bottom: 1px solid #e6e8ee; }
.tabs button { height: 39px; padding-top: 2px; border-bottom: 4px solid transparent; }
.tabs .sel { border-color: #1bad5b; color: #1bad5b; font-weight: 400; }
.search-row { display: flex; align-items: center; gap: 15px; padding: 5px 24px 3px 15px; }
.search { display: flex; align-items: center; flex: 1; min-width: 0; height: 33px; padding-left: 11px; gap: 7px; border: 1px solid #ccc; border-radius: 3px; background: #fff; }
.search svg { width: 18px; height: 18px; }
.search input { flex: 1; min-width: 0; border: 0; padding: 0; background: none; outline: 0; }
.search input::placeholder { color: #999; opacity: 1; }
.search-row button svg { width: 4px; height: 16px; fill: #444; }
.dims { display: flex; height: 479px; flex: none; overflow: hidden; }
.dim-list { flex: 1; overflow: hidden; }
.dims h4, .measures h4 { padding: 8px 0 0 17px; line-height: 20px; }
.fields { display: grid; grid-auto-rows: 32px 33px; margin-top: 6px; }
.fields li { display: flex; align-items: center; gap: 8px; padding-left: 15px; }
.fields svg, .fields b { width: 18px; height: 16px; color: #1bad5b; }
.fields b { font: bold 10px/16px "Liberation Sans", sans-serif; }
.fields .or svg { color: #f9a52b; height: 18px; }
.dim-scroll { width: 9px; padding: 0 1px; }
.dim-scroll i { height: 387px; }
.splitter { display: grid; place-items: center; height: 9px; flex: none; background: #f0f1f2; }
.splitter i { width: 14px; height: 3px; background: #c8c8c8; }

/* right rail */
.rail { display: flex; flex-direction: column; width: 42px; flex: none; background: #e8e9ea; color: #888; }
.rail > button { display: flex; flex-direction: column; align-items: center; gap: 5px; height: 63px; padding-top: 8px; flex: none; }
.rail > button:first-child { height: 62px; }
.rail .sel { background: #f8f9fb; color: #555; }
.rail svg { width: 20px; height: 20px; }
.rail-bottom { display: grid; gap: 15px; margin-top: 315px; }
.vert { display: flex; flex-direction: column; align-items: center; gap: 5px; }
.vert span { width: 15px; }
.vert .back { width: 10px; height: 16px; }
.vert .tight { line-height: 17px; }

/* pop-up menus */
.menu { position: absolute; display: flex; flex-direction: column; background: #fff; box-shadow: 0 1px 8px #00000033; }
.menu button { position: relative; display: flex; align-items: center; justify-content: space-between; text-align: left; padding: 0 14px 0 24px; height: 33px; flex: none; }
.menu svg { width: 8px; height: 13px; }
.menu hr { width: 100%; height: 1px; margin: 2px 0; border: 0; background: #e8eaee; }
.menu .hover { background: #f0f1f2; }
.menu .dot::before { content: ""; position: absolute; left: 10px; top: 12px; width: 7px; height: 7px; border-radius: 50%; background: #444; }
.ctx { right: 171px; top: 311px; width: 276px; padding-bottom: 2px; }
.sub { right: 447px; top: 349px; width: 228px; min-height: 293px; border-radius: 3px; }
.sub button { flex: 1; height: auto; }
.mark { position: absolute; border: 4px solid #fe2010; border-radius: 6px; }
.mark-chip { right: 259px; top: 277px; width: 208px; height: 40px; }
.mark-line { right: 562px; top: 413px; width: 116px; height: 35px; }

.note { position: absolute; left: 139px; top: 735px; font-size: 25px; line-height: 32px; font-weight: 350; color: #ff1a0c; white-space: nowrap; }
.bot { position: absolute; right: 32px; bottom: 0; width: 70px; height: 28px; }
.watermark { position: absolute; right: 14px; top: 918px; font-size: 18px; line-height: 24px; color: #888; text-shadow: 1px 1px 0 #fff; }
```
